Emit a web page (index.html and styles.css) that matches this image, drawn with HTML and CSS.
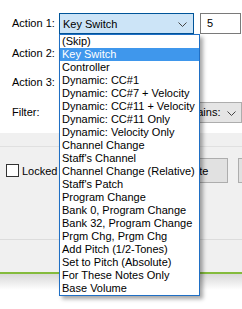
FILE: index.html
```html
<!DOCTYPE html>
<html lang="en">

<head>
    <meta charset="UTF-8">
    <meta name="viewport" content="width=device-width, initial-scale=1.0">
    <title>Actions</title>
    <link rel="stylesheet" href="styles.css">
</head>

<body>
    <div class="page">
        <div class="top">
            <label class="lbl">Action 1:</label>
            <div class="combo open">
                <span>Key Switch</span>
                <svg class="arrow" width="9" height="5" viewBox="0 0 9 5"><path d="M0.5 0.5 L4.5 4.5 L8.5 0.5" fill="none" stroke="#444" stroke-width="1"/></svg>
                <ul class="droplist">
                    <li>(Skip)</li>
                    <li class="sel">Key Switch</li>
                    <li>Controller</li>
                    <li>Dynamic: CC#1</li>
                    <li>Dynamic: CC#7 + Velocity</li>
                    <li>Dynamic: CC#11 + Velocity</li>
                    <li>Dynamic: CC#11 Only</li>
                    <li>Dynamic: Velocity Only</li>
                    <li>Channel Change</li>
                    <li>Staff's Channel</li>
                    <li>Channel Change (Relative)</li>
                    <li>Staff's Patch</li>
                    <li>Program Change</li>
                    <li>Bank 0, Program Change</li>
                    <li>Bank 32, Program Change</li>
                    <li>Prgm Chg, Prgm Chg</li>
                    <li>Add Pitch (1/2-Tones)</li>
                    <li>Set to Pitch (Absolute)</li>
                    <li>For These Notes Only</li>
                    <li>Base Volume</li>
                </ul>
            </div>
            <div class="field">5</div>

            <label class="lbl">Action 2:</label>
            <div class="combo"></div>
            <div></div>

            <label class="lbl">Action 3:</label>
            <div class="combo"></div>
            <div></div>

            <label class="lbl">Filter:</label>
            <div class="filter">
                <span>Contains:</span>
                <svg class="arrow" width="9" height="5" viewBox="0 0 9 5"><path d="M0.5 0.5 L4.5 4.5 L8.5 0.5" fill="none" stroke="#444" stroke-width="1"/></svg>
            </div>
        </div>

        <div class="panel">
            <div class="sep"></div>
            <div class="controls">
                <div class="check">
                    <span class="box"></span>
                    <span>Locked</span>
                </div>
                <button class="btn">Delete</button>
                <button class="btn"></button>
            </div>
            <div class="sep2"></div>
        </div>
        <div class="footer"></div>
    </div>
</body>

</html>
```

FILE: styles.css
```css
html,
body {
    margin: 0;
    background-color: #ffffff;
}

.page {
    width: 242px;
    height: 309px;
    overflow: hidden;
    font-family: "Liberation Sans", Arial, sans-serif;
    font-size: 11px;
    color: #000;
}

.top {
    height: 133px;
    box-sizing: border-box;
    padding: 13px 0 0 12px;
    display: grid;
    grid-template-columns: 41px 135px 42px;
    grid-template-rows: 21px 21px 21px 21px;
    column-gap: 6px;
    row-gap: 8.67px;
    align-items: center;
    background-color: #ffffff;
}

.lbl {
    line-height: 13px;
    white-space: nowrap;
}

.combo {
    position: relative;
    height: 21px;
    box-sizing: border-box;
    border: 1px solid #adadad;
    background-color: #e5e5e5;
    display: flex;
    align-items: center;
    padding-left: 3px;
}

.combo.open {
    background-color: #cce4f7;
    border-color: #005499;
    z-index: 2;
}

.combo .arrow {
    position: absolute;
    right: 6px;
    top: 8px;
}

.field {
    height: 21px;
    box-sizing: border-box;
    border: 1px solid #7a7a7a;
    padding-left: 6px;
    line-height: 19px;
    margin-right: 1px;
}

.filter {
    grid-column: 2 / 4;
    margin-left: 111px;
    height: 21px;
    box-sizing: border-box;
    border: 1px solid #adadad;
    background-color: #e5e5e5;
    position: relative;
    padding-left: 3px;
    line-height: 19px;
}

.filter .arrow {
    position: absolute;
    right: 5px;
    top: 8px;
}

.droplist {
    position: absolute;
    top: 20px;
    left: -1px;
    width: 141px;
    box-sizing: border-box;
    margin: 0;
    padding: 0;
    list-style: none;
    background-color: #ffffff;
    border: 1px solid #1f6fc5;
    box-shadow: 3px 3px 4px rgba(0, 0, 0, 0.35);
}

.droplist li {
    height: 13px;
    line-height: 13px;
    padding-left: 2px;
    white-space: nowrap;
}

.droplist li.sel {
    background-color: #3f97ec;
    color: #ffffff;
}

.panel {
    background-color: #f0f0f0;
    height: 139px;
    overflow: hidden;
}

.sep {
    margin-top: 13px;
    height: 1px;
    background-color: #e0e0e0;
}

.controls {
    width: 313px;
    margin-top: 11px;
    height: 25px;
    display: flex;
    align-items: center;
    gap: 10px;
}

.check {
    flex: 1;
    display: flex;
    align-items: center;
    gap: 3px;
    padding-left: 6px;
}

.box {
    width: 13px;
    height: 13px;
    box-sizing: border-box;
    border: 1px solid #333333;
    background-color: #ffffff;
}

.btn {
    flex: 0 0 75px;
    height: 25px;
    border: 1px solid #adadad;
    background-color: #e1e1e1;
    font-family: "Liberation Sans", Arial, sans-serif;
    font-size: 11px;
    padding: 0 0 0 4px;
}

.sep2 {
    margin-top: 56px;
    height: 1px;
    background-color: #dcdcdc;
}

.footer {
    border-top: 2px solid #84bb3d;
    height: 35px;
    background: linear-gradient(#d8d8d8, #ffffff 16px);
}
```
